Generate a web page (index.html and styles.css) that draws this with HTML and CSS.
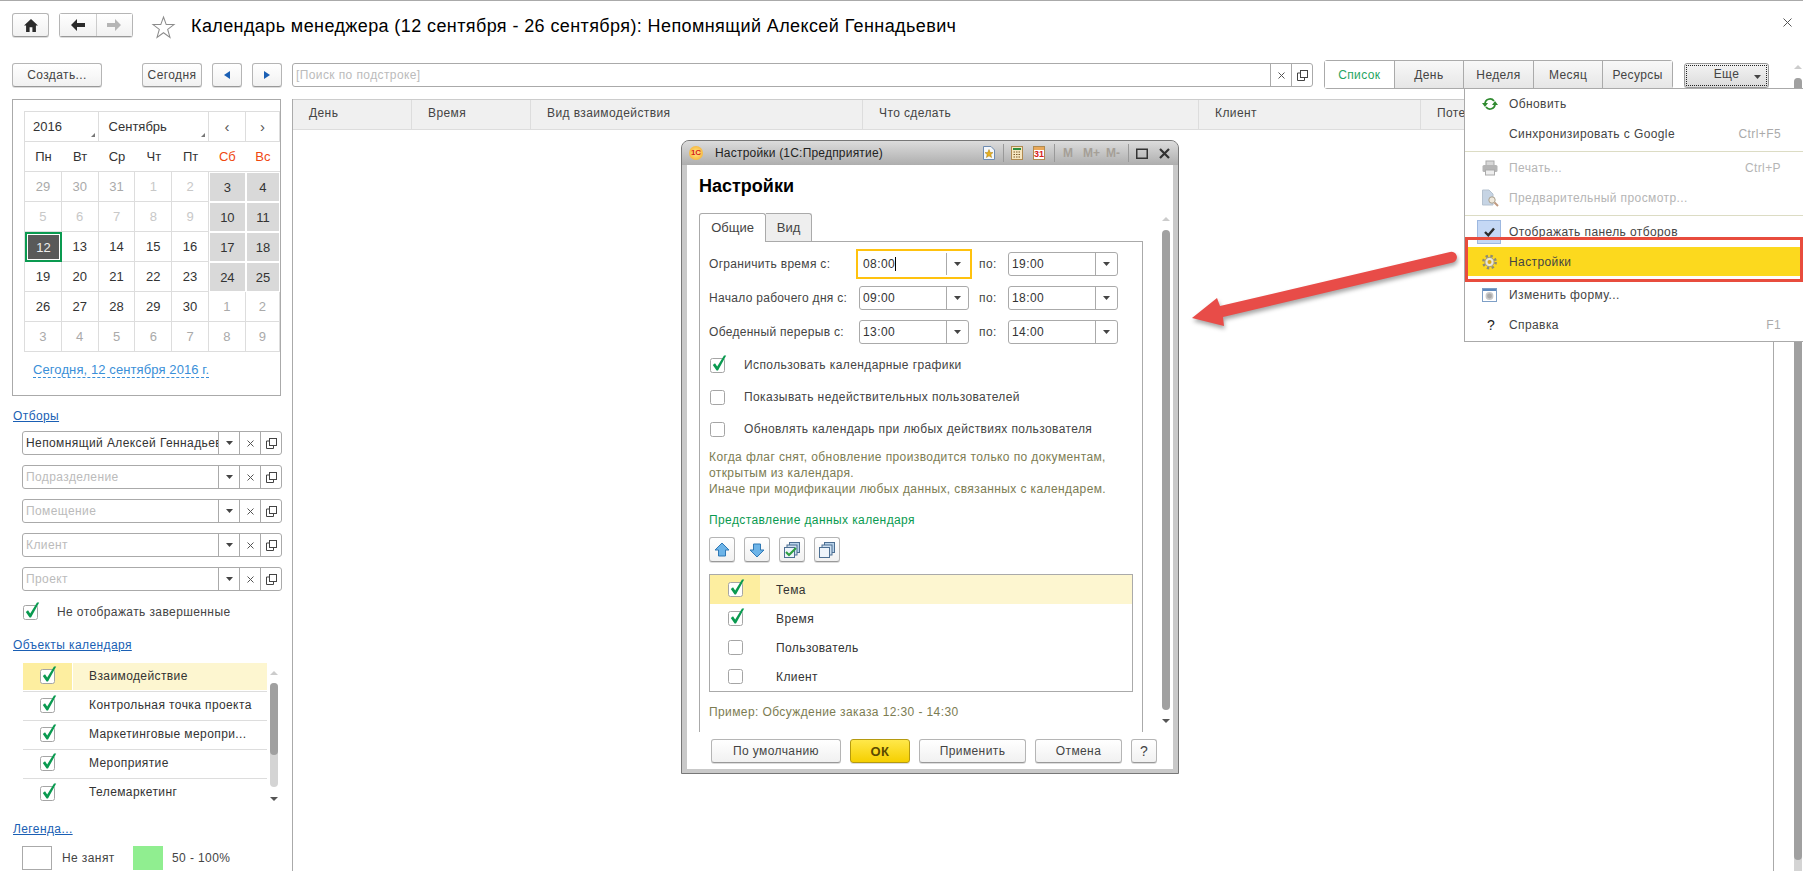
FILE: index.html
```html
<!DOCTYPE html>
<html lang="ru">
<head>
    <meta charset="UTF-8">
    <title>Календарь менеджера</title>
    <link rel="stylesheet" href="styles.css">
</head>
<body>
<svg class="defs" width="0" height="0">
    <symbol id="check" viewBox="0 0 17 18">
        <rect x="0.5" y="3.5" width="14" height="14" rx="2" fill="#fff" stroke="#a5a5a5"/>
        <path d="M2.8 10L5 8.3L7.2 11.4L14 .5H16.2L8 15.6H6.6Z" fill="#0a9a50"/>
    </symbol>
    <symbol id="uncheck" viewBox="0 0 17 18">
        <rect x="0.5" y="3.5" width="14" height="14" rx="2" fill="#fff" stroke="#a5a5a5"/>
    </symbol>
    <symbol id="caret" viewBox="0 0 7 4"><path d="M0 0H7L3.5 4Z" fill="#444"/></symbol>
    <symbol id="cross" viewBox="0 0 7 7"><path d="M.5 .5L6.5 6.5M6.5 .5L.5 6.5" stroke="#555" fill="none"/></symbol>
    <symbol id="copy" viewBox="0 0 11 11">
        <path d="M3.5 3H.5V10.5H7.5V8" fill="none" stroke="#444"/>
        <rect x="3.5" y=".5" width="7" height="7" fill="#fff" stroke="#444"/>
    </symbol>
</svg>

<div class="page">
    <header class="topbar">
        <button class="btn btn-home">
            <svg width="14" height="13" viewBox="0 0 15 14"><path d="M7.5 0L15 7H12.8V14H9V9H6V14H2.2V7H0Z" fill="#2b2b2b"/></svg>
        </button>
        <div class="btn-pair">
            <button class="btn-half">
                <svg width="14" height="12" viewBox="0 0 14 12"><path d="M6 0V4H14V8H6V12L0 6Z" fill="#2b2b2b"/></svg>
            </button>
            <button class="btn-half">
                <svg width="14" height="12" viewBox="0 0 14 12"><path d="M8 0V4H0V8H8V12L14 6Z" fill="#b5b5b5"/></svg>
            </button>
        </div>
        <svg class="star" width="23" height="23" viewBox="0 0 22 22"><path d="M11 1L13.6 8.2H21L15 12.8L17.2 20.5L11 16L4.8 20.5L7 12.8L1 8.2H8.4Z" fill="#fff" stroke="#8c8c8c"/></svg>
        <h1 class="title">Календарь менеджера (12 сентября - 26 сентября): Непомнящий Алексей Геннадьевич</h1>
        <svg class="close" width="9" height="9" viewBox="0 0 9 9"><path d="M.5 .5L8.5 8.5M8.5 .5L.5 8.5" stroke="#555" fill="none"/></svg>
    </header>

    <div class="below">
        <div class="workspace">
            <div class="toolbar">
                <button class="btn btn-create">Создать...</button>
                <button class="btn btn-today">Сегодня</button>
                <button class="btn btn-nav"><svg width="6" height="8" viewBox="0 0 7 10" preserveAspectRatio="none"><path d="M7 0V10L0 5Z" fill="#1a5fb4"/></svg></button>
                <button class="btn btn-nav"><svg width="6" height="8" viewBox="0 0 7 10" preserveAspectRatio="none"><path d="M0 0V10L7 5Z" fill="#1a5fb4"/></svg></button>
                <div class="field field-search">
                    <span class="field-text muted">[Поиск по подстроке]</span>
                    <span class="field-btn"><svg width="7" height="7"><use href="#cross"/></svg></span>
                    <span class="field-btn"><svg width="11" height="11"><use href="#copy"/></svg></span>
                </div>
                <div class="views">
                    <span class="view view-on">Список</span>
                    <span class="view">День</span>
                    <span class="view">Неделя</span>
                    <span class="view">Месяц</span>
                    <span class="view">Ресурсы</span>
                </div>
                <button class="btn btn-more"><span class="more-inner">Еще<svg width="7" height="4"><use href="#caret"/></svg></span></button>
            </div>

            <div class="main">
                <aside class="side">
                    <div class="calendar">
                        <div class="cal-grid">
                            <div class="cal-cell cal-year">2016<i class="corner"></i></div>
                            <div class="cal-cell cal-month">Сентябрь<i class="corner"></i></div>
                            <div class="cal-cell cal-arrow">‹</div>
                            <div class="cal-cell cal-arrow">›</div>

                            <div class="cal-cell cal-head">Пн</div><div class="cal-cell cal-head">Вт</div><div class="cal-cell cal-head">Ср</div><div class="cal-cell cal-head">Чт</div><div class="cal-cell cal-head">Пт</div><div class="cal-cell cal-head red">Сб</div><div class="cal-cell cal-head red">Вс</div>

                            <div class="cal-cell off">29</div><div class="cal-cell off">30</div><div class="cal-cell off">31</div><div class="cal-cell faint">1</div><div class="cal-cell faint">2</div><div class="cal-cell rest">3</div><div class="cal-cell rest">4</div>
                            <div class="cal-cell faint">5</div><div class="cal-cell faint">6</div><div class="cal-cell faint">7</div><div class="cal-cell faint">8</div><div class="cal-cell faint">9</div><div class="cal-cell rest">10</div><div class="cal-cell rest">11</div>
                            <div class="cal-cell selected">12</div><div class="cal-cell">13</div><div class="cal-cell">14</div><div class="cal-cell">15</div><div class="cal-cell">16</div><div class="cal-cell rest">17</div><div class="cal-cell rest">18</div>
                            <div class="cal-cell">19</div><div class="cal-cell">20</div><div class="cal-cell">21</div><div class="cal-cell">22</div><div class="cal-cell">23</div><div class="cal-cell rest">24</div><div class="cal-cell rest">25</div>
                            <div class="cal-cell">26</div><div class="cal-cell">27</div><div class="cal-cell">28</div><div class="cal-cell">29</div><div class="cal-cell">30</div><div class="cal-cell off">1</div><div class="cal-cell off">2</div>
                            <div class="cal-cell off">3</div><div class="cal-cell off">4</div><div class="cal-cell off">5</div><div class="cal-cell off">6</div><div class="cal-cell off">7</div><div class="cal-cell off">8</div><div class="cal-cell off">9</div>
                        </div>
                        <a class="today-link">Сегодня, 12 сентября 2016 г.</a>
                    </div>

                    <a class="side-link link-filters">Отборы</a>
                    <div class="filters">
                        <div class="field"><span class="field-text">Непомнящий Алексей Геннадьевич</span><span class="field-btn"><svg width="7" height="4"><use href="#caret"/></svg></span><span class="field-btn"><svg width="7" height="7"><use href="#cross"/></svg></span><span class="field-btn"><svg width="11" height="11"><use href="#copy"/></svg></span></div>
                        <div class="field"><span class="field-text muted">Подразделение</span><span class="field-btn"><svg width="7" height="4"><use href="#caret"/></svg></span><span class="field-btn"><svg width="7" height="7"><use href="#cross"/></svg></span><span class="field-btn"><svg width="11" height="11"><use href="#copy"/></svg></span></div>
                        <div class="field"><span class="field-text muted">Помещение</span><span class="field-btn"><svg width="7" height="4"><use href="#caret"/></svg></span><span class="field-btn"><svg width="7" height="7"><use href="#cross"/></svg></span><span class="field-btn"><svg width="11" height="11"><use href="#copy"/></svg></span></div>
                        <div class="field"><span class="field-text muted">Клиент</span><span class="field-btn"><svg width="7" height="4"><use href="#caret"/></svg></span><span class="field-btn"><svg width="7" height="7"><use href="#cross"/></svg></span><span class="field-btn"><svg width="11" height="11"><use href="#copy"/></svg></span></div>
                        <div class="field"><span class="field-text muted">Проект</span><span class="field-btn"><svg width="7" height="4"><use href="#caret"/></svg></span><span class="field-btn"><svg width="7" height="7"><use href="#cross"/></svg></span><span class="field-btn"><svg width="11" height="11"><use href="#copy"/></svg></span></div>
                    </div>
                    <label class="hide-done"><svg class="cb" width="17" height="18"><use href="#check"/></svg>Не отображать завершенные</label>

                    <a class="side-link link-objects">Объекты календаря</a>
                    <div class="objects">
                        <div class="obj-list">
                            <div class="obj-row obj-row-on"><span class="obj-check"><svg width="17" height="18"><use href="#check"/></svg></span><span class="obj-name">Взаимодействие</span></div>
                            <div class="obj-row"><span class="obj-check"><svg width="17" height="18"><use href="#check"/></svg></span><span class="obj-name">Контрольная точка проекта</span></div>
                            <div class="obj-row"><span class="obj-check"><svg width="17" height="18"><use href="#check"/></svg></span><span class="obj-name">Маркетинговые меропри...</span></div>
                            <div class="obj-row"><span class="obj-check"><svg width="17" height="18"><use href="#check"/></svg></span><span class="obj-name">Мероприятие</span></div>
                            <div class="obj-row obj-row-last"><span class="obj-check"><svg width="17" height="18"><use href="#check"/></svg></span><span class="obj-name">Телемаркетинг</span></div>
                        </div>
                        <div class="vbar vbar-obj">
                            <i class="arr arr-up"></i>
                            <div class="track"><div class="thumb"></div></div>
                            <i class="arr arr-down"></i>
                        </div>
                    </div>

                    <a class="side-link link-legend">Легенда...</a>
                    <div class="legend">
                        <span class="swatch"></span><span class="legend-text legend-free">Не занят</span>
                        <span class="swatch swatch-green"></span><span class="legend-text">50 - 100%</span>
                    </div>
                </aside>

                <section class="grid-area">
                    <div class="grid-head">
                        <span>День</span><span>Время</span><span>Вид взаимодействия</span><span>Что сделать</span><span>Клиент</span><span>Потенциал</span>
                    </div>
                </section>
            </div>
        </div>

        <div class="vbar vbar-page">
            <i class="arr arr-up"></i>
            <div class="track"><div class="thumb"></div></div>
        </div>
    </div>

    <!-- окно настроек -->
    <div class="dialog">
        <div class="dlg-title">
            <span class="logo-1c">1С</span>
            <span class="dlg-caption">Настройки (1С:Предприятие)</span>
            <svg class="ti ti-fav" width="12" height="14" viewBox="0 0 12 14"><path d="M.5 .5H8L11.5 4V13.5H.5Z" fill="#f4f7fb" stroke="#6d8bb0"/><path d="M6 3.5L7.2 6.6H10L7.8 8.5L8.6 11.5L6 9.8L3.4 11.5L4.2 8.5L2 6.6H4.8Z" fill="#e8b020" stroke="#a67c10" stroke-width=".5"/></svg>
            <i class="ti-sep"></i>
            <svg class="ti ti-calc" width="12" height="14" viewBox="0 0 12 14"><rect x=".5" y=".5" width="11" height="13" fill="#f7e6c0" stroke="#b08a50"/><rect x="2" y="2" width="8" height="2" fill="#2f8f3f"/><path d="M2.5 6H9.5M2.5 8.5H9.5M2.5 11H9.5" stroke="#7a5a2a" stroke-dasharray="1.5 1"/></svg>
            <span class="ti-cal">31</span>
            <i class="ti-sep ti-sep2"></i>
            <span class="ti-m ti-m1">M</span><span class="ti-m ti-m2">M+</span><span class="ti-m ti-m3">M-</span>
            <i class="ti-sep ti-sep3"></i>
            <svg class="ti-max" width="12" height="11" viewBox="0 0 12 11"><rect x=".75" y="1.25" width="10.5" height="9" fill="none" stroke="#333" stroke-width="1.5"/></svg>
            <svg class="ti-close" width="11" height="11" viewBox="0 0 11 11"><path d="M1 1L10 10M10 1L1 10" stroke="#333" stroke-width="2.2" fill="none"/></svg>
        </div>
        <div class="dlg-body">
            <h2 class="dlg-head">Настройки</h2>
            <div class="dlg-columns">
                <div class="dlg-left">
                    <div class="tabs">
                        <span class="tab tab-on">Общие</span>
                        <span class="tab">Вид</span>
                    </div>
                    <div class="tab-panel">
                        <div class="time-row">
                            <span class="time-label">Ограничить время с:</span>
                            <div class="field field-time field-focus"><span class="field-text">08:00<i class="cursor"></i></span><span class="field-btn"><svg width="7" height="4"><use href="#caret"/></svg></span></div>
                            <span class="time-to">по:</span>
                            <div class="field field-time"><span class="field-text">19:00</span><span class="field-btn"><svg width="7" height="4"><use href="#caret"/></svg></span></div>
                        </div>
                        <div class="time-row">
                            <span class="time-label">Начало рабочего дня с:</span>
                            <div class="field field-time"><span class="field-text">09:00</span><span class="field-btn"><svg width="7" height="4"><use href="#caret"/></svg></span></div>
                            <span class="time-to">по:</span>
                            <div class="field field-time"><span class="field-text">18:00</span><span class="field-btn"><svg width="7" height="4"><use href="#caret"/></svg></span></div>
                        </div>
                        <div class="time-row">
                            <span class="time-label">Обеденный перерыв с:</span>
                            <div class="field field-time"><span class="field-text">13:00</span><span class="field-btn"><svg width="7" height="4"><use href="#caret"/></svg></span></div>
                            <span class="time-to">по:</span>
                            <div class="field field-time"><span class="field-text">14:00</span><span class="field-btn"><svg width="7" height="4"><use href="#caret"/></svg></span></div>
                        </div>

                        <label class="opt"><svg class="cb" width="17" height="18"><use href="#check"/></svg>Использовать календарные графики</label>
                        <label class="opt"><svg class="cb" width="17" height="18"><use href="#uncheck"/></svg>Показывать недействительных пользователей</label>
                        <label class="opt"><svg class="cb" width="17" height="18"><use href="#uncheck"/></svg>Обновлять календарь при любых действиях пользователя</label>

                        <p class="note">Когда флаг снят, обновление производится только по документам,<br>открытым из календаря.<br>Иначе при модификации любых данных, связанных с календарем.</p>
                        <div class="green-head">Представление данных календаря</div>

                        <div class="mini-tools">
                            <button class="btn btn-mini"><svg width="16" height="16" viewBox="0 0 16 16"><path d="M8 1L15 8H11.5V14H4.5V8H1Z" fill="#6db4e8" stroke="#2f78b5"/></svg></button>
                            <button class="btn btn-mini"><svg width="16" height="16" viewBox="0 0 16 16"><path d="M8 15L15 8H11.5V2H4.5V8H1Z" fill="#6db4e8" stroke="#2f78b5"/></svg></button>
                            <button class="btn btn-mini"><svg width="18" height="18" viewBox="0 0 18 18"><rect x="6.5" y="1.5" width="10" height="10" fill="#b9d3ea" stroke="#4d6f92"/><rect x="4" y="4" width="10" height="10" fill="#cfe0f0" stroke="#4d6f92"/><rect x="1.5" y="6.5" width="10" height="10" fill="#eef4fa" stroke="#4d6f92"/><path d="M3 11L6 14L13 7" fill="none" stroke="#2ea043" stroke-width="2.2"/></svg></button>
                            <button class="btn btn-mini"><svg width="18" height="18" viewBox="0 0 18 18"><rect x="6.5" y="1.5" width="10" height="10" fill="#b9d3ea" stroke="#4d6f92"/><rect x="4" y="4" width="10" height="10" fill="#cfe0f0" stroke="#4d6f92"/><rect x="1.5" y="6.5" width="10" height="10" fill="#eef4fa" stroke="#4d6f92"/></svg></button>
                        </div>

                        <div class="fields-table">
                            <div class="ft-row ft-row-on"><span class="ft-check"><svg width="17" height="18"><use href="#check"/></svg></span><span class="ft-name">Тема</span></div>
                            <div class="ft-row"><span class="ft-check"><svg width="17" height="18"><use href="#check"/></svg></span><span class="ft-name">Время</span></div>
                            <div class="ft-row"><span class="ft-check"><svg width="17" height="18"><use href="#uncheck"/></svg></span><span class="ft-name">Пользователь</span></div>
                            <div class="ft-row"><span class="ft-check"><svg width="17" height="18"><use href="#uncheck"/></svg></span><span class="ft-name">Клиент</span></div>
                        </div>
                        <div class="sample">Пример: Обсуждение заказа 12:30 - 14:30</div>
                    </div>
                </div>
                <div class="vbar vbar-dlg">
                    <i class="arr arr-up"></i>
                    <div class="track"><div class="thumb"></div></div>
                    <i class="arr arr-down"></i>
                </div>
            </div>
            <div class="dlg-footer">
                <button class="btn btn-default">По умолчанию</button>
                <button class="btn btn-ok">ОК</button>
                <button class="btn btn-apply">Применить</button>
                <button class="btn btn-cancel">Отмена</button>
                <button class="btn btn-help">?</button>
            </div>
        </div>
    </div>

    <!-- меню "Еще" -->
    <div class="menu">
        <div class="mi"><svg class="mi-ico" width="16" height="14" viewBox="0 0 16 14"><path d="M3 7A5 5 0 0 1 12 4M13 7A5 5 0 0 1 4 10" fill="none" stroke="#2f8a2f" stroke-width="1.8"/><path d="M0 6H6L3 10ZM10 8H16L13 4Z" fill="#2f8a2f"/></svg><span class="mi-text">Обновить</span></div>
        <div class="mi"><span class="mi-text">Синхронизировать с Google</span><span class="mi-key">Ctrl+F5</span></div>
        <div class="mi-sep"></div>
        <div class="mi mi-off"><svg class="mi-ico" width="16" height="15" viewBox="0 0 16 15"><rect x="4" y=".5" width="8" height="5" fill="#d8d8d8" stroke="#aaa"/><rect x=".5" y="4.5" width="15" height="7" rx="1.5" fill="#b5b5b5"/><rect x="3.5" y="9.5" width="9" height="5" fill="#eee" stroke="#aaa"/></svg><span class="mi-text">Печать...</span><span class="mi-key">Ctrl+P</span></div>
        <div class="mi mi-off"><svg class="mi-ico" width="17" height="17" viewBox="0 0 17 17"><path d="M.5 .5H7L11 4.5V15.5H.5Z" fill="#c6d4e4" stroke="#b5c2d0"/><circle cx="10" cy="10.5" r="3.2" fill="#efe9dd" stroke="#a9a08e"/><path d="M12.5 13L16 16.5" stroke="#c09a80" stroke-width="2"/></svg><span class="mi-text">Предварительный просмотр...</span></div>
        <div class="mi-sep"></div>
        <div class="mi"><span class="mi-tick"><svg width="11" height="10" viewBox="0 0 11 10"><path d="M1 5L4.3 8.3L10 1.5" fill="none" stroke="#2c2c2c" stroke-width="2.4"/></svg></span><span class="mi-text">Отображать панель отборов</span></div>
        <div class="mi mi-hot"><svg class="mi-ico" width="15" height="15" viewBox="0 0 15 15"><circle cx="7.5" cy="7.5" r="6.2" fill="none" stroke="#8f8a72" stroke-width="2.4" stroke-dasharray="2.4 2.5"/><circle cx="7.5" cy="7.5" r="4.6" fill="#e9e6d8" stroke="#8f8a72" stroke-width=".8"/><circle cx="7.5" cy="7.5" r="2" fill="#d9a818"/></svg><span class="mi-text">Настройки</span></div>
        <div class="mi"><svg class="mi-ico" width="15" height="14" viewBox="0 0 15 14"><rect x=".5" y=".5" width="14" height="13" fill="#fff" stroke="#7e9fc6"/><rect x="1" y="1" width="13" height="2" fill="#5d89bd"/><circle cx="7.5" cy="8" r="3.2" fill="#a9a9a9" stroke="#c9c9c9" stroke-width="1.5"/></svg><span class="mi-text">Изменить форму...</span></div>
        <div class="mi"><span class="mi-q">?</span><span class="mi-text">Справка</span><span class="mi-key">F1</span></div>
    </div>

    <div class="red-frame"></div>
    <svg class="pointer" width="280" height="90" viewBox="0 0 280 90">
        <path d="M10 68L35 48L38 56L268 2A5.3 5.3 0 0 1 271 12.4L41 67L42 76Z" fill="#e84c48"/>
    </svg>
</div>
</body>
</html>
```

FILE: styles.css
```css
* {
    box-sizing: border-box;
}

html, body {
    margin: 0;
    padding: 0;
    background-color: #fff;
}

body {
    font-family: "Liberation Sans", Arial, sans-serif;
    font-size: 12px;
    letter-spacing: .4px;
    color: #444;
}

.defs {
    position: absolute;
}

svg {
    display: block;
    flex: none;
    overflow: visible;
}

button {
    font-family: inherit;
    font-size: inherit;
    letter-spacing: inherit;
    color: inherit;
    padding: 0;
}

.page {
    position: relative;
    width: 1803px;
    height: 871px;
    overflow: hidden;
    border-top: 1px solid #aaa;
}

/* верхняя строка */
.topbar {
    display: flex;
    align-items: flex-start;
    height: 59px;
    padding: 12px 0 0 12px;
}

.btn {
    display: flex;
    align-items: center;
    justify-content: center;
    height: 24px;
    background: linear-gradient(#fff, #f1f1f1);
    border: 1px solid #b5b5b5;
    border-bottom-color: #999;
    border-radius: 3px;
    box-shadow: 0 1px 0 #ddd;
}

.btn-home {
    width: 37px;
}

.btn-pair {
    display: flex;
    width: 74px;
    height: 24px;
    margin-left: 10px;
    border: 1px solid #b5b5b5;
    border-bottom-color: #999;
    border-radius: 3px;
    box-shadow: 0 1px 0 #ddd;
}

.btn-half {
    flex: 1;
    display: flex;
    align-items: center;
    justify-content: center;
    background: linear-gradient(#fff, #f1f1f1);
    border: none;
}

.btn-half + .btn-half {
    border-left: 1px solid #ccc;
}

.star {
    margin: 3px 0 0 19px;
}

.title {
    margin: 2px 0 0 16px;
    font-size: 18px;
    font-weight: normal;
    line-height: 22px;
    color: #000;
    white-space: nowrap;
}

.close {
    margin: 5px 11px 0 auto;
}

/* всё что ниже заголовка */
.below {
    display: flex;
    height: 811px;
}

.workspace {
    width: 1790px;
}

.toolbar {
    display: flex;
    align-items: center;
    height: 30px;
    padding-left: 12px;
}

.btn-create {
    width: 90px;
}

.btn-today {
    width: 60px;
    margin-left: 40px;
}

.btn-nav {
    width: 30px;
    margin-left: 10px;
}

.field {
    display: flex;
    align-items: stretch;
    height: 24px;
    background-color: #fff;
    border: 1px solid #aaa;
    border-radius: 3px;
}

.field-text {
    flex: 1;
    min-width: 0;
    padding-left: 3px;
    line-height: 22px;
    white-space: nowrap;
    overflow: hidden;
    color: #333;
}

.field-text.muted {
    color: #bbb;
}

.field-btn {
    display: flex;
    align-items: center;
    justify-content: center;
    width: 21px;
    border-left: 1px solid #aaa;
}

.field-search {
    width: 1021px;
    margin-left: 10px;
}

.views {
    display: flex;
    align-self: flex-start;
    width: 349px;
    height: 29px;
    margin-left: 11px;
    border: 1px solid #aaa;
    border-radius: 3px;
}

.view {
    flex: 1;
    line-height: 29px;
    text-align: center;
    background: linear-gradient(#f8f8f8, #e6e6e6);
    border-left: 1px solid #aaa;
}

.view-on {
    border-left: none;
    background: #fff;
    color: #1fa55f;
}

.btn-more {
    width: 85px;
    height: 25px;
    margin-left: 11px;
    background: linear-gradient(#f3f3f3, #dcdcdc);
    border-color: #999;
}

.more-inner {
    position: relative;
    width: 81px;
    height: 21px;
    line-height: 17px;
    text-align: center;
    border: 1px dotted #222;
}

.more-inner svg {
    position: absolute;
    right: 5px;
    top: 9px;
}

/* основная часть */
.main {
    display: flex;
    margin-top: 9px;
    height: 772px;
}

.side {
    width: 292px;
    padding-left: 12px;
}

.calendar {
    width: 269px;
    height: 297px;
    padding: 11px 0 0 11px;
    border: 1px solid #aaa;
}

.cal-grid {
    display: grid;
    grid-template-columns: repeat(6, 36.8px) 1fr;
    grid-auto-rows: 30px;
    border-top: 1px solid #ddd;
    border-left: 1px solid #ddd;
}

.cal-cell {
    position: relative;
    display: flex;
    align-items: center;
    justify-content: center;
    border-right: 1px solid #ddd;
    border-bottom: 1px solid #ddd;
    color: #333;
    font-size: 13px;
    letter-spacing: 0;
}

.cal-cell:nth-child(n+5):nth-child(-n+11),
.cal-head {
    border-right: none;
}

.cal-year {
    grid-column: span 2;
    justify-content: flex-start;
    padding-left: 8px;
}

.cal-month {
    grid-column: span 3;
    justify-content: flex-start;
    padding-left: 10px;
}

.cal-arrow {
    font-size: 15px;
    color: #555;
}

.corner {
    position: absolute;
    right: 3px;
    bottom: 4px;
    border-left: 4px solid transparent;
    border-bottom: 4px solid #777;
}

.cal-head.red {
    color: #f0480f;
}

.cal-cell.off {
    color: #aaa;
}

.cal-cell.faint {
    color: #c8c8c8;
}

.rest {
    background-color: #d9d9d9;
    border: 1px solid #fff;
    color: #333;
}

.cal-cell.selected {
    background-color: #595959;
    border: 2px solid #0a9a50;
    box-shadow: inset 0 0 0 1px #fff;
    color: #eee;
}

.today-link {
    display: inline-block;
    margin: 10px 0 0 9px;
    line-height: 15px;
    color: #3a8fd8;
    border-bottom: 1px dashed #3a8fd8;
    font-size: 13px;
    letter-spacing: .1px;
}

.side-link {
    display: block;
    width: fit-content;
    line-height: 16px;
    color: #1a5fb4;
    text-decoration: underline;
}

.link-filters {
    margin: 12px 0 0 1px;
}

.filters {
    display: flex;
    flex-direction: column;
    gap: 10px;
    width: 260px;
    margin: 7px 0 0 10px;
}

.hide-done {
    display: flex;
    align-items: center;
    height: 16px;
    margin: 13px 0 0 11px;
}

.cb {
    margin-top: -3px;
}

.hide-done .cb {
    margin-right: 17px;
}

.link-objects {
    margin: 17px 0 0 1px;
}

.objects {
    display: flex;
    margin: 10px 0 0 11px;
}

.obj-list {
    width: 244px;
}

.obj-row {
    display: flex;
    align-items: center;
    height: 29px;
    color: #333;
    border-bottom: 1px solid #ddd;
}

.obj-row-last {
    border-bottom: none;
}

.obj-check {
    display: flex;
    justify-content: center;
    align-self: stretch;
    align-items: center;
    width: 49px;
    padding: 0 0 4px 2px;
}

.obj-name {
    flex: 1;
    align-self: stretch;
    line-height: 27px;
    margin-left: 1px;
    padding-left: 16px;
    white-space: nowrap;
}

.obj-row-on .obj-check {
    background-color: #fdeea0;
    margin-bottom: 1px;
}

.obj-row-on .obj-name {
    background-color: #fdf6d0;
    margin-bottom: 1px;
}

/* полоса прокрутки */
.vbar {
    display: flex;
    flex-direction: column;
    align-items: center;
    width: 8px;
}

.arr {
    display: block;
    flex: none;
    border-left: 4px solid transparent;
    border-right: 4px solid transparent;
}

.arr-up {
    border-bottom: 4px solid #ccc;
}

.arr-down {
    border-top: 4px solid #555;
}

.track {
    flex: 1;
    width: 8px;
    border-radius: 4px;
    background-color: #d4d4d4;
}

.thumb {
    width: 8px;
    background-color: #a0a0a0;
    border-radius: 4px;
}

.vbar-obj {
    height: 130px;
    margin: 8px 0 0 3px;
}

.vbar-obj .track {
    margin: 8px 0 10px;
}

.vbar-obj .thumb {
    height: 72px;
}

.vbar-page {
    margin: 5px 0 0 4px;
}

.vbar-page .track {
    margin-top: 9px;
    border-radius: 4px 4px 0 0;
}

.vbar-page .thumb {
    height: 782px;
}

.link-legend {
    margin: 13px 0 0 1px;
}

.legend {
    display: flex;
    align-items: center;
    margin: 9px 0 0 10px;
}

.swatch {
    width: 30px;
    height: 24px;
    border: 1px solid #aaa;
}

.swatch-green {
    background-color: #90ee90;
    border: none;
}

.legend-text {
    margin-left: 9px;
}

.legend-free {
    width: 71px;
    margin-left: 10px;
}

.grid-area {
    width: 1482px;
    border-left: 1px solid #aaa;
    border-right: 1px solid #aaa;
}

.grid-head {
    display: grid;
    grid-template-columns: 119px 119px 332px 336px 222px 1fr;
    height: 31px;
    background-color: #f0f0f0;
    border-top: 1px solid #ccc;
    border-bottom: 1px solid #ddd;
}

.grid-head span {
    padding-left: 16px;
    line-height: 27px;
    border-right: 1px solid #ddd;
}

/* окно настроек */
.dialog {
    position: absolute;
    left: 681px;
    top: 139px;
    width: 498px;
    height: 634px;
    padding: 0 5px 5px;
    background-color: #c9c9c9;
    border: 1px solid #777;
    border-radius: 8px 8px 0 0;
}

.dlg-title {
    display: flex;
    align-items: center;
    height: 24px;
    margin: 0 -5px;
    padding-left: 7px;
    background: linear-gradient(#dcdcdc, #aeaeae);
    border-radius: 7px 7px 0 0;
}

.logo-1c {
    width: 14px;
    height: 14px;
    border-radius: 50%;
    background: radial-gradient(#ffe98a, #f5a623);
    color: #d6201a;
    font-size: 8px;
    font-weight: bold;
    letter-spacing: 0;
    line-height: 14px;
    text-align: center;
}

.dlg-caption {
    width: 268px;
    margin-left: 12px;
    font-size: 12px;
    letter-spacing: .2px;
    color: #222;
}

.ti-sep {
    width: 1px;
    height: 18px;
    margin: 0 7px 0 8px;
    background-color: #999;
}

.ti-sep2 {
    margin: 0 8px 0 9px;
}

.ti-sep3 {
    margin: 0 7px 0 0;
}

.ti-cal {
    width: 12px;
    height: 14px;
    margin-left: 10px;
    background: linear-gradient(#e8a85a 3px, #fff 3px);
    border: 1px solid #b08a50;
    color: #d6201a;
    font-size: 9px;
    font-weight: bold;
    letter-spacing: 0;
    line-height: 15px;
    text-align: center;
}

.ti-m {
    font-size: 12px;
    font-weight: bold;
    letter-spacing: 0;
    color: #a59f97;
}

.ti-m1 {
    width: 20px;
}

.ti-m2 {
    width: 23px;
}

.ti-m3 {
    width: 22px;
}

.ti-close {
    margin-left: 11px;
}

.dlg-body {
    height: 604px;
    padding: 0 0 0 12px;
    background-color: #fff;
}

.dlg-head {
    margin: 0;
    padding-top: 10px;
    font-size: 18px;
    font-weight: bold;
    letter-spacing: 0;
    line-height: 22px;
    color: #000;
}

.dlg-columns {
    display: flex;
    margin-top: 16px;
}

.dlg-left {
    width: 444px;
}

.tabs {
    display: flex;
    height: 28px;
}

.tab {
    width: 46px;
    line-height: 28px;
    text-align: center;
    background-color: #eee;
    border: 1px solid #aaa;
    border-bottom: none;
    border-left: none;
    border-radius: 0 3px 0 0;
    font-size: 13px;
    letter-spacing: 0;
}

.tab-on {
    position: relative;
    width: 67px;
    margin-bottom: -1px;
    height: 29px;
    background-color: #fff;
    border-left: 1px solid #aaa;
    border-radius: 3px 3px 0 0;
    z-index: 1;
}

.tab-panel {
    height: 491px;
    padding: 5px 0 0 9px;
    border: 1px solid #aaa;
    border-bottom: none;
}

.time-row {
    display: flex;
    align-items: center;
    height: 34px;
}

.time-label {
    width: 150px;
    white-space: nowrap;
    letter-spacing: .3px;
}

.field-time {
    width: 110px;
}

.field-time .field-btn {
    width: 22px;
}

.field-focus {
    outline: 2px solid #ffc20e;
    outline-offset: 1px;
    border-color: transparent;
    border-radius: 0;
}

.field-focus .field-btn {
    border-left-color: #aaa;
}

.cursor {
    display: inline-block;
    width: 1px;
    height: 14px;
    vertical-align: -3px;
    background-color: #000;
}

.time-to {
    width: 39px;
    padding-left: 10px;
}

.opt {
    display: flex;
    align-items: center;
    height: 32px;
    padding-left: 1px;
}

.opt .cb {
    margin-right: 17px;
}

.note {
    margin: 4px 0 0;
    line-height: 16px;
    color: #7c7c52;
    white-space: nowrap;
}

.green-head {
    margin-top: 15px;
    line-height: 16px;
    color: #0a9a50;
}

.mini-tools {
    display: flex;
    gap: 9px;
    margin-top: 9px;
}

.btn-mini {
    width: 26px;
    height: 25px;
}

.fields-table {
    width: 424px;
    height: 118px;
    margin-top: 12px;
    border: 1px solid #aaa;
}

.ft-row {
    display: flex;
    align-items: center;
    height: 29px;
    color: #333;
}

.ft-check {
    display: flex;
    justify-content: center;
    align-items: center;
    align-self: stretch;
    width: 50px;
    padding: 0 0 3px 2px;
}

.ft-name {
    margin-left: 16px;
}

.ft-row-on {
    background-color: #fdf6d0;
}

.ft-row-on .ft-check {
    background-color: #fdeea0;
}

.sample {
    margin-top: 12px;
    line-height: 16px;
    color: #7c7c52;
}

.vbar-dlg {
    height: 506px;
    margin: 4px 0 0 19px;
}

.vbar-dlg .track {
    margin: 9px 0 9px;
    background-color: #a0a0a0;
}

.dlg-footer {
    display: flex;
    gap: 9px;
    margin: 7px 0 0 12px;
}

.btn-default {
    width: 130px;
}

.btn-ok {
    width: 60px;
    background: linear-gradient(#ffe84a, #f5cf00);
    border-color: #b59a10;
    font-size: 13px;
    font-weight: bold;
    color: #5a4a00;
}

.btn-apply {
    width: 107px;
}

.btn-cancel {
    width: 87px;
}

.btn-help {
    width: 26px;
    font-size: 14px;
}

/* меню */
.menu {
    position: absolute;
    left: 1464px;
    top: 87px;
    width: 339px;
    height: 254px;
    background-color: #fff;
    border: 1px solid #aaa;
    border-right: none;
}

.mi {
    position: relative;
    display: flex;
    align-items: center;
    height: 30px;
    padding-left: 44px;
    color: #444;
    white-space: nowrap;
}

.mi-ico,
.mi-tick,
.mi-q {
    position: absolute;
    left: 17px;
    top: 50%;
    transform: translateY(-50%);
}

.mi-key {
    margin-left: auto;
    margin-right: 22px;
    color: #aaa;
}

.mi-off {
    color: #b5b5b5;
}

.mi-off .mi-key {
    color: #b5b5b5;
}

.mi-sep {
    height: 1px;
    margin: 2px 0 1px;
    background-color: #dcdcc4;
}

.mi-tick {
    left: 12px;
    display: flex;
    align-items: center;
    justify-content: center;
    width: 24px;
    height: 24px;
    background-color: #c5d8f5;
    border: 1px solid #9db8e0;
}

.mi-hot {
    height: 29px;
    margin: 0 2px 4px 3px;
    padding-left: 41px;
    background-color: #fcd91e;
}

.mi-hot .mi-ico {
    left: 14px;
}

.mi-q {
    left: 22px;
    font-size: 14px;
    color: #222;
}

.red-frame {
    position: absolute;
    left: 1465px;
    top: 236px;
    width: 338px;
    height: 45px;
    border: 3px solid #e84c3d;
}

.pointer {
    position: absolute;
    left: 1182px;
    top: 249px;
    filter: drop-shadow(1px 3px 2px rgba(0, 0, 0, .35));
}
```
